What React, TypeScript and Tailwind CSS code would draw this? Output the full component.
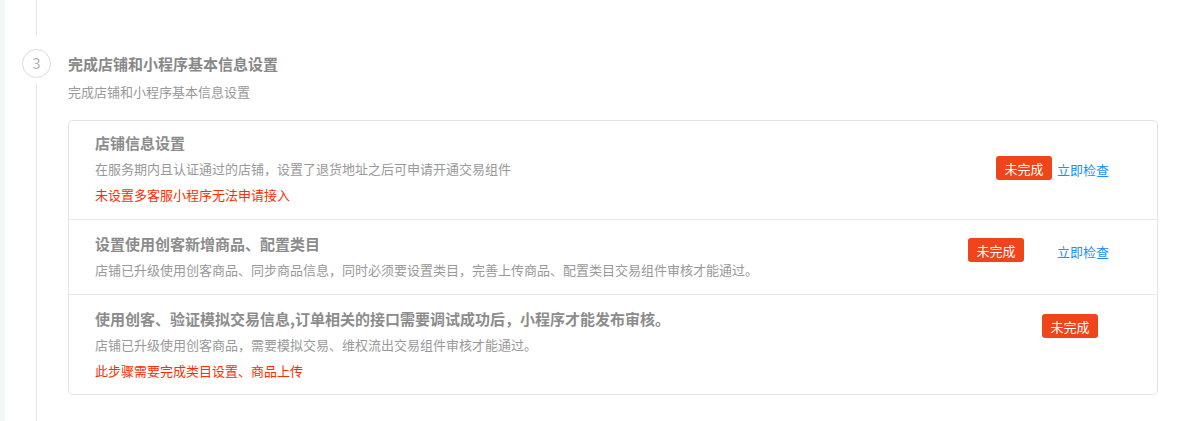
import React from "react";

type Task = {
    title: string;
    desc: string;
    warn?: string;
    right: React.ReactNode;
    top: string;
    pad: string;
};

const Badge = () => (
    <span className="inline-flex items-center justify-center w-[56px] h-[24px] rounded-[3px] bg-[#f0441a] text-white text-[13px] leading-none">
        未完成
    </span>
);

const Check = () => (
    <a className="text-[13px] text-[#1890ff] leading-none cursor-pointer">立即检查</a>
);

const tasks: Task[] = [
    {
        title: "店铺信息设置",
        desc: "在服务期内且认证通过的店铺，设置了退货地址之后可申请开通交易组件",
        warn: "未设置多客服小程序无法申请接入",
        top: "mt-[21px]",
        pad: "pt-[14px] pb-[16px]",
        right: (
            <div className="flex items-center mr-[48px]">
                <Badge />
                <span className="ml-[5px]"><Check /></span>
            </div>
        ),
    },
    {
        title: "设置使用创客新增商品、配置类目",
        desc: "店铺已升级使用创客商品、同步商品信息，同时必须要设置类目，完善上传商品、配置类目交易组件审核才能通过。",
        top: "mt-[2px]",
        pad: "pt-[16px] pb-[16px]",
        right: (
            <div className="flex items-center mr-[48px]">
                <Badge />
                <span className="ml-[33px]"><Check /></span>
            </div>
        ),
    },
    {
        title: "使用创客、验证模拟交易信息,订单相关的接口需要调试成功后，小程序才能发布审核。",
        desc: "店铺已升级使用创客商品，需要模拟交易、维权流出交易组件审核才能通过。",
        warn: "此步骤需要完成类目设置、商品上传",
        top: "mt-[3px]",
        pad: "pt-[16px] pb-[15px]",
        right: (
            <div className="flex items-center mr-[59px]">
                <Badge />
            </div>
        ),
    },
];

export default function App() {
    return (
        <div
            className="flex w-[1203px] h-[421px] overflow-hidden bg-white"
            style={{ fontFamily: '"Microsoft YaHei", "Noto Sans CJK SC", "Noto Sans", sans-serif' }}
        >
            <div className="w-[5px] bg-[#f5f6f8]" />
            {/* step rail */}
            <div className="w-[63px] flex flex-col items-center">
                <div className="w-px h-[35px] bg-[#e8e8e8]" />
                <div className="mt-[14px] w-[29px] h-[29px] rounded-full border border-[#dcdcdc] flex items-center justify-center text-[15px] text-[#b5b5b5]">
                    3
                </div>
                <div className="mt-[5px] w-px flex-1 bg-[#e8e8e8]" />
            </div>
            <div className="flex-1 pr-[45px] pt-[54px]">
                <div className="text-[15px] leading-[20px] font-bold text-[#888888]">完成店铺和小程序基本信息设置</div>
                <div className="mt-[10px] text-[13px] leading-[16px] text-[#999999]">完成店铺和小程序基本信息设置</div>
                <div className="mt-[20px] border border-[#e3e3e3] rounded-[5px]">
                    {tasks.map((t, i) => (
                        <div
                            key={i}
                            className={`flex items-start pl-[26px] ${i > 0 ? "border-t border-[#e8e8e8]" : ""} ${t.pad}`}
                        >
                            <div className="flex-1">
                                <div className="text-[15px] leading-[16px] font-bold text-[#8c8c8c]">{t.title}</div>
                                <div className="mt-[10px] text-[13px] leading-[16px] text-[#999999]">{t.desc}</div>
                                {t.warn ? (
                                    <div className="mt-[10px] text-[13px] leading-[16px] text-[#ff2d00]">{t.warn}</div>
                                ) : null}
                            </div>
                            <div className={t.top}>{t.right}</div>
                        </div>
                    ))}
                </div>
            </div>
        </div>
    );
}
